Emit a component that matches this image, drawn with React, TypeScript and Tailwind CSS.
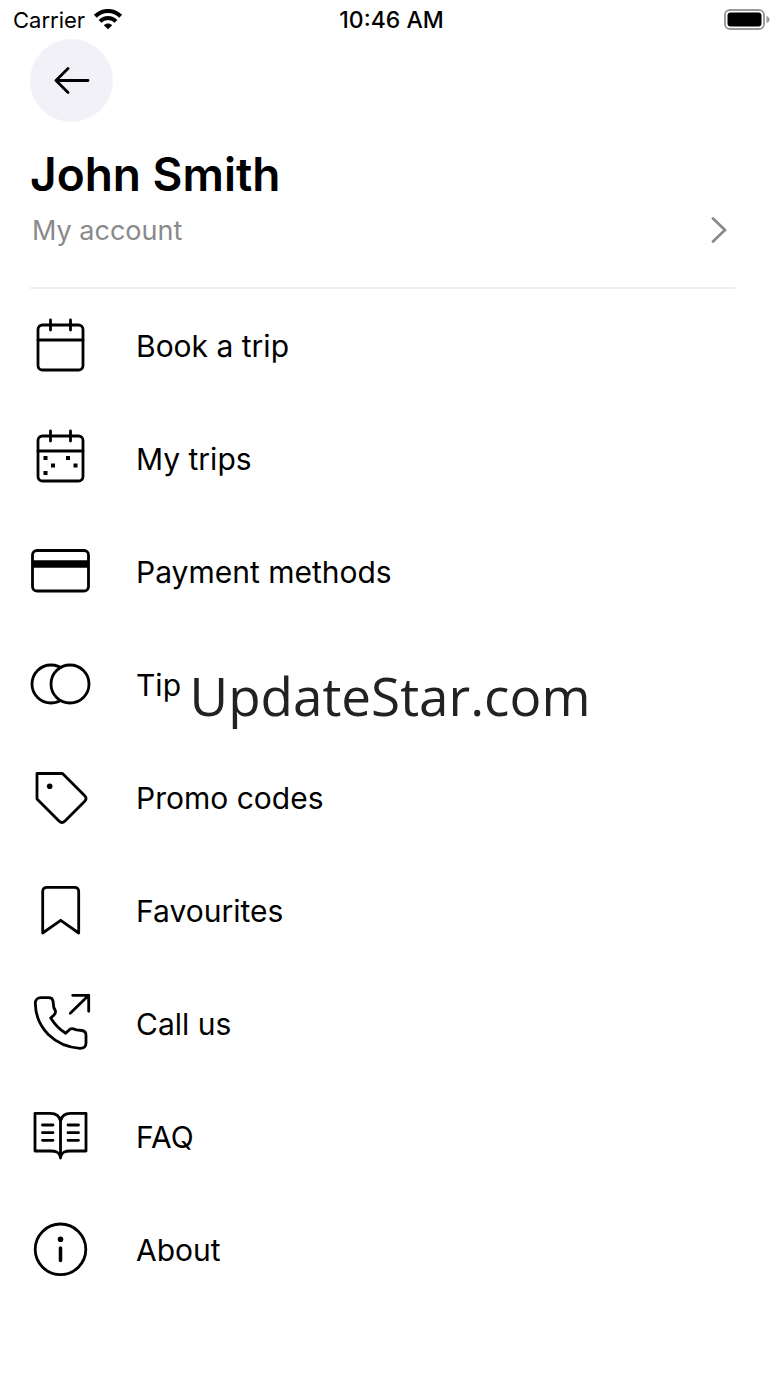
import React from 'react';

interface MenuItem {
  label: string;
  icon: React.ReactNode;
}

const menuItems: MenuItem[] = [
  {
    label: 'Book a trip',
    icon: (
      <>
        <rect x="8" y="10" width="45" height="45" rx="4.5" />
        <path d="M8 25H53M20.5 5V15M40.5 5V15" />
      </>
    ),
  },
  {
    label: 'My trips',
    icon: (
      <>
        <rect x="8" y="8" width="45" height="45" rx="4.5" />
        <path d="M8 23H53M20.5 3V13M40.5 3V13" />
        <path
          d="M13.5 28h4v4h-4zM36 28h4v4h-4zM21 35.5h4v4h-4zM43.5 35.5h4v4h-4zM13.5 43h4v4h-4z"
          fill="currentColor"
          stroke="none"
        />
      </>
    ),
  },
  {
    label: 'Payment methods',
    icon: (
      <>
        <rect x="2.5" y="9.5" width="56" height="40.5" rx="4.5" />
        <path d="M2.5 23H58.5" strokeWidth="7.5" strokeLinecap="butt" />
      </>
    ),
  },
  {
    label: 'Tip',
    icon: (
      <>
        <circle cx="21" cy="30" r="19" />
        <circle cx="40" cy="30" r="19" fill="white" />
      </>
    ),
  },
  {
    label: 'Promo codes',
    icon: (
      <>
        <path d="M7 6.5H32.5L54.5 28.5Q57.5 31.5 54.5 34.5L35 54Q32 57 29 54L7 32Z" />
        <circle cx="19.7" cy="19.3" r="2.8" fill="currentColor" stroke="none" />
      </>
    ),
  },
  {
    label: 'Favourites',
    icon: <path d="M12.7 53V11.5Q12.7 7.3 17 7.3H44.4Q48.7 7.3 48.7 11.5V53L30.7 40.3Z" />,
  },
  {
    label: 'Call us',
    icon: (
      <>
        <path d="M5.3 10.5C5.3 7 7.5 4.7 11 4.7H18.5C21 4.7 22.6 5.8 23 8L23.8 14.5L25.3 17.5C26 19.5 25.5 20.5 24 22L20.7 25C24.5 31 29.5 36.5 35.7 40.3L38.8 37.2C40.3 35.5 41.5 35.2 43.5 35.8L46.5 36.8L52 37.5C54.8 38 56 39.3 56 42V50C56 53.5 53.8 55.3 50 55.3C38 54.5 27 50 18.3 41.5C10 33 5.5 22 5.3 10.5Z" />
        <path d="M40.3 20.3L58.7 2.3M42.7 2.3H58.7V18.3" />
      </>
    ),
  },
  {
    label: 'FAQ',
    icon: (
      <>
        <path d="M30.5 15C29.5 10 26 7.3 20.5 7.3H5V45H20.5C26 45 29 46 30.5 51C32 46 35 45 40.5 45H56V7.3H40.5C35 7.3 31.5 10 30.5 15ZM30.5 15V52" />
        <path d="M12.5 19H23M12.5 26.7H23M12.5 34.3H23M38 19H48.5M38 26.7H48.5M38 34.3H48.5" />
      </>
    ),
  },
  {
    label: 'About',
    icon: (
      <>
        <circle cx="30.5" cy="30.3" r="25.3" />
        <circle cx="30.5" cy="20.3" r="2.8" fill="currentColor" stroke="none" />
        <path d="M30.5 29V41.5" strokeWidth="3.5" />
      </>
    ),
  },
];

function StatusBar() {
  return (
    <div className="grid h-[39px] grid-cols-3 items-center pr-[10px] pl-[13px] text-[22px] leading-[28px]">
      <div className="flex items-center gap-2">
        <span>Carrier</span>
        <svg className="h-[22px] w-[30px]" viewBox="0 0 30 22" fill="none" stroke="currentColor" strokeWidth="4">
          <path d="M2.3 7.2C9.5 0.2 20.5 0.2 27.7 7.2" />
          <path d="M7 12.4C11.5 8 18.5 8 23 12.4" />
          <path d="M10.8 16.2C13.2 13.8 16.8 13.8 19.2 16.2L15 20.3Z" fill="currentColor" stroke="none" />
        </svg>
      </div>
      <span className="text-center text-[23px] font-medium">10:46 AM</span>
      <svg className="h-[22px] w-[46px] justify-self-end" viewBox="0 0 46 22" fill="none">
        <rect x="1" y="1" width="39" height="19" rx="5" stroke="#999999" strokeWidth="2" />
        <rect x="3.5" y="3.5" width="34" height="14" rx="3" fill="black" />
        <path d="M42.5 7C46.5 8 46.5 13 42.5 14Z" fill="#999999" />
      </svg>
    </div>
  );
}

function MenuRow({ label, icon }: MenuItem) {
  return (
    <li>
      <button type="button" className="flex w-full items-center gap-[46px] pt-[26px] pb-[27px] text-left">
        <svg
          className="h-[60px] w-[60px] shrink-0 overflow-visible"
          viewBox="0 0 60 60"
          fill="none"
          stroke="currentColor"
          strokeWidth="2.8"
          strokeLinecap="round"
          strokeLinejoin="round"
          aria-hidden="true"
        >
          {icon}
        </svg>
        <span className="pt-[2px] text-[30px] leading-[40px]">{label}</span>
      </button>
    </li>
  );
}

export default function App() {
  return (
    <div className="relative min-h-screen bg-white font-['Inter','Liberation_Sans',sans-serif] text-black">
      <StatusBar />
      <main className="pr-[45px] pl-[30px]">
        <button
          type="button"
          aria-label="Back"
          className="flex size-[83px] items-center justify-center rounded-full bg-[#f2f1f7]"
        >
          <svg
            className="h-[28px] w-[38px]"
            viewBox="0 0 38 28"
            fill="none"
            stroke="currentColor"
            strokeWidth="2.8"
            strokeLinecap="round"
            strokeLinejoin="round"
          >
            <path d="M35 13.5H3M15 1.5L3 13.5L15 25.5" />
          </svg>
        </button>
        <h1 className="mt-[24px] text-[46px] leading-[56px] font-semibold">John Smith</h1>
        <button
          type="button"
          className="flex w-full items-center justify-between border-b-2 border-[#efefef] pt-[11px] pr-[7px] pb-[38px] pl-[2px] text-left text-[#8a8a8a]"
        >
          <span className="text-[27px] leading-[36px]">My account</span>
          <svg
            className="h-[28px] w-[18px]"
            viewBox="0 0 18 28"
            fill="none"
            stroke="currentColor"
            strokeWidth="2.8"
            strokeLinecap="round"
            strokeLinejoin="round"
          >
            <path d="M3 1.5L15 13L3 24.5" />
          </svg>
        </button>
        <ul>
          {menuItems.map((item) => (
            <MenuRow key={item.label} label={item.label} icon={item.icon} />
          ))}
        </ul>
      </main>
      <div className="pointer-events-none absolute inset-0 flex items-center justify-center">
        <span className="pt-1 font-['Open_Sans','Noto_Sans',sans-serif] text-[53px] leading-[64px] text-[#222222]">
          UpdateStar.com
        </span>
      </div>
    </div>
  );
}
